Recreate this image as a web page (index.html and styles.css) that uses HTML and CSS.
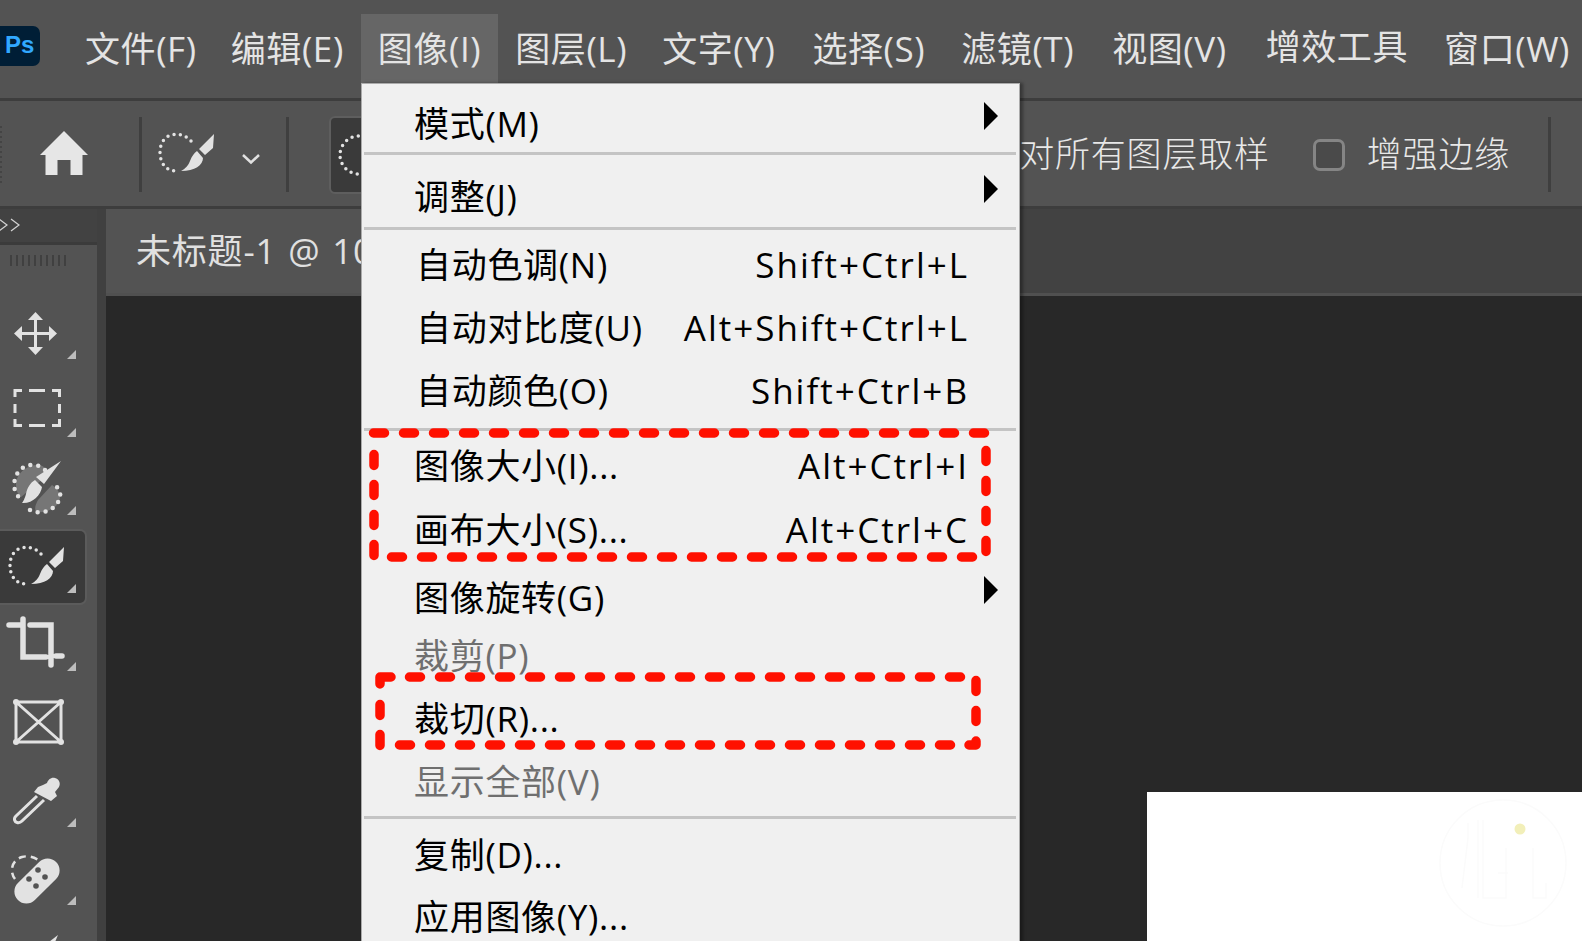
FILE: index.html
```html
<!DOCTYPE html>
<html lang="zh-CN">
<head>
<meta charset="utf-8">
<title>Photoshop 图像菜单</title>
<link rel="stylesheet" href="styles.css">
</head>
<body>
<div class="app">
  <header class="menubar">
    <div class="logo">Ps</div>
    <nav class="menus">
      <span class="mi">文件(F)</span>
      <span class="mi">编辑(E)</span>
      <span class="mi active">图像(I)</span>
      <span class="mi">图层(L)</span>
      <span class="mi">文字(Y)</span>
      <span class="mi">选择(S)</span>
      <span class="mi">滤镜(T)</span>
      <span class="mi">视图(V)</span>
      <span class="mi raised">增效工具</span>
      <span class="mi">窗口(W)</span>
    </nav>
  </header>

  <section class="options">
    <div class="grip-v"></div>
    <svg class="home" viewBox="0 0 50 46"><path d="M25 1 49 25 43.500 25V45H31.500V30H18.500V45H6.500V25H1Z"/></svg>
    <div class="divider first"></div>
    <svg class="preset" viewBox="0 0 60 44">
      <use href="#qs"/>
    </svg>
    <svg class="chev" viewBox="0 0 20 12"><path d="M2 2 10 9.500 18 2"/></svg>
    <div class="divider second"></div>
    <div class="opt-tool">
      <svg viewBox="0 0 30 44"><circle class="dots" cx="28" cy="22" r="19"/></svg>
    </div>
    <div class="opt-right">
      <span class="opt-text">对所有图层取样</span>
      <span class="check"></span>
      <span class="opt-text">增强边缘</span>
      <div class="divider last"></div>
    </div>
  </section>

  <section class="work">
    <aside class="tools">
      <div class="collapse"><svg viewBox="0 0 22 14"><path d="M-1 1 7 7-1 13M11 1 19 7 11 13"/></svg></div>
      <div class="panel">
        <div class="grip-h"></div>

        <div class="tool more">
          <svg viewBox="0 0 90 76"><path class="line" d="M35.500 20V58M16 38.500H55"/><path class="fill" d="M35.500 17 43 25H28ZM35.500 60 43 52H28ZM14 38.500 22 31V46ZM57 38.500 49 31V46Z"/></svg>
        </div>
        <div class="tool more">
          <svg viewBox="0 0 90 76"><path class="line" d="M15 24V17.500H22M29 17.500H45M52 17.500H59.500V24M59.500 31V40M59.500 46V52.500H52M45 52.500H29M22 52.500H15V46M15 40V31"/></svg>
        </div>
        <div class="tool more">
          <svg viewBox="0 0 90 76">
            <path class="shade" d="M38 14C27 14 16 22 16 34 16 39 18 44 21 46L43 28C45 24 46 21 45 17 43 15 41 14 38 14ZM36 61C46 62 58 58 60 47 60 41 56 36 52 34L38 49C36 53 34 57 36 61Z"/>
            <path class="dots fat" d="M45 19C36 10 19 13 15 28 13 36 15 43 20 47M30 59C41 65 56 59 60 47 61 42 59 38 56 35"/>
            <path class="fill" d="M61 10 44 33 36 26ZM35 29 42 36C41 44 32 53 22 52 23 51 25 47 26 43 27 37 30 32 35 29Z"/>
          </svg>
        </div>
        <div class="tool more selected">
          <svg viewBox="0 0 90 76"><use href="#qs" x="9" y="17"/></svg>
        </div>
        <div class="tool more">
          <svg viewBox="0 0 90 76"><path class="line thick" d="M9 18H22M23 12V50H46M30 18H51V58M56 49H62"/></svg>
        </div>
        <div class="tool">
          <svg viewBox="0 0 90 76"><path class="line" d="M16 17H61V57H16ZM16 17 61 57M61 17 16 57"/><circle class="fill" cx="16" cy="17" r="3"/><circle class="fill" cx="61" cy="17" r="3"/><circle class="fill" cx="16" cy="57" r="3"/><circle class="fill" cx="61" cy="57" r="3"/></svg>
        </div>
        <div class="tool more">
          <svg viewBox="0 0 90 76"><path class="line" d="M37 33 16 53C13 56 15 59 17 59.500 19 60 21 59 22 58L44 37"/><path class="fill" d="M38 24 43 22 47 20C48 17 51 14 55 15 59 16 61 20 59 24L55 29 57 33 51 38 34 29Z"/></svg>
        </div>
        <div class="tool more">
          <svg viewBox="0 0 90 76">
            <path class="dash-arc" d="M15 38C9 30 12 19 22 16 29 14 36 17 40 20"/>
            <rect class="fill" x="10" y="28" width="54" height="24" rx="12" transform="rotate(-45 37 40)"/>
            <circle class="hole" cx="38" cy="29" r="2.800"/><circle class="hole" cx="45" cy="36" r="2.800"/><circle class="hole" cx="29" cy="38" r="2.800"/><circle class="hole" cx="36" cy="45" r="2.800"/>
          </svg>
        </div>
        <div class="tool">
          <svg viewBox="0 0 90 76"><path class="fill" d="M58 16 45 26 52 30Z"/></svg>
        </div>
      </div>
    </aside>
    <div class="gutter"></div>
    <main class="doc">
      <div class="tabs">
        <div class="tab">未标题-1 @ 100%</div>
      </div>
      <div class="canvas-area">
        <div class="page">
          <svg class="mark" viewBox="0 0 130 130">
            <circle class="mark-ring" cx="65" cy="65" r="63"/>
            <path class="mark-line" d="M30 25V40L24 90M40 22V100M45 22V100H68V50M70 75H60M95 50V100H108V85"/>
            <circle class="mark-dot" cx="82" cy="31" r="5.500"/>
          </svg>
        </div>
      </div>
    </main>
  </section>

  <div class="dropdown">
    <div class="row r-first"><span>模式(M)</span><i class="arrow"></i></div>
    <div class="sep"></div>
    <div class="row r-14"><span>调整(J)</span><i class="arrow"></i></div>
    <div class="sep s-2"></div>
    <div class="row shift"><span>自动色调(N)</span><kbd>Shift+Ctrl+L</kbd></div>
    <div class="row shift"><span>自动对比度(U)</span><kbd>Alt+Shift+Ctrl+L</kbd></div>
    <div class="row shift"><span>自动颜色(O)</span><kbd>Shift+Ctrl+B</kbd></div>
    <div class="sep s-9"></div>
    <div class="row"><span>图像大小(I)...</span><kbd>Alt+Ctrl+I</kbd></div>
    <div class="row r-8"><span>画布大小(S)...</span><kbd>Alt+Ctrl+C</kbd></div>
    <div class="row r-12"><span>图像旋转(G)</span><i class="arrow"></i></div>
    <div class="row r-2 off"><span>裁剪(P)</span></div>
    <div class="row"><span>裁切(R)...</span></div>
    <div class="row off"><span>显示全部(V)</span></div>
    <div class="sep s-6"></div>
    <div class="row r-8"><span>复制(D)...</span></div>
    <div class="row r-6"><span>应用图像(Y)...</span></div>
  </div>

  <svg class="notes" viewBox="0 0 1582 941">
    <path class="dash" d="M373.500 433H985M986 450.500V552M391.500 557H973M374 454.500V556"/>
    <path class="solid" d="M380 684V677H391M976 741V745H969M380 704.500V715.500M380 734.500V745.500M976 680.500V691.500M976 710.500V721.500"/>
    <path class="dash" d="M409.500 677H961M399.500 745H951"/>
  </svg>

  <svg class="defs" width="0" height="0">
    <defs>
      <g id="qs">
        <path class="dots" d="M32 8C27 2 19 0 12 2 5 4 1 11 1 19 1 27 4 33 9 36 12 38 15 38 19 38"/>
        <path class="fill" d="M55 1 54 15 46 22 40 16ZM38 18 44 25C44 32 36 38 22 38 27 35 29 33 31 28 33 23 35 20 38 18Z"/>
      </g>
    </defs>
  </svg>
</div>
</body>
</html>
```
FILE: styles.css
```css
* { box-sizing: border-box; }
html, body { margin: 0; padding: 0; height: 100%; overflow: hidden; background: #535353; }
body { font-family: "Open Sans", "Noto Sans CJK SC", sans-serif; }

.app { position: relative; width: 1582px; height: 941px; overflow: hidden; display: flex; flex-direction: column; }

/* menu bar */
.menubar { height: 101px; flex: none; display: flex; align-items: flex-start; background: #535353; border-bottom: 3px solid #3d3d3d; }
.logo { width: 40px; height: 40px; margin-top: 26px; flex: none; border-radius: 0 7px 7px 0; background: #001e36; color: #31a8ff; font: 700 24px/38px "Liberation Sans", sans-serif; padding-left: 5px; }
.menus { display: flex; margin-left: 28px; margin-top: 14px; }
.mi { height: 69px; padding: 0 17px; font-size: 35px; line-height: 69px; color: #e4e4e4; white-space: nowrap; letter-spacing: .6px; }
.mi:nth-child(5) { margin-left: 1px; }
.mi:nth-child(6) { margin-left: 3px; }
.mi:nth-child(7) { margin-left: 2px; }
.mi:nth-child(8) { margin-left: 4px; }
.mi:nth-child(9) { margin-left: 5px; }
.mi:nth-child(10) { margin-left: 2px; }
.mi.active { background: #666; }
.mi.raised { line-height: 65px; }

/* options bar */
.options { height: 108px; flex: none; display: flex; align-items: center; background: #535353; border-bottom: 3px solid #3d3d3d; position: relative; padding-top: 2px; }
.grip-v { width: 2px; height: 58px; margin-right: 38px; background: repeating-linear-gradient(#444 0 2px, transparent 2px 5px); }
.home { width: 50px; height: 46px; margin-top: -4px; margin-left: -1px; fill: #e6e6e6; flex: none; }
.divider { width: 3px; height: 75px; background: #3f3f3f; flex: none; }
.divider.first { margin-left: 50px; }
.preset { width: 60px; height: 44px; margin-left: 17px; flex: none; overflow: visible; }
.chev { width: 20px; height: 12px; margin-left: 22px; margin-top: 8px; fill: none; stroke: #e0e0e0; stroke-width: 2.500; flex: none; }
.divider.second { margin-left: 25px; }
.opt-tool { width: 60px; height: 78px; margin-left: 40px; background: #3a3a3a; border: 2px solid #5e5e5e; border-radius: 6px; display: flex; align-items: center; flex: none; }
.opt-tool svg { width: 30px; height: 44px; }
.opt-right { margin-left: auto; display: flex; align-items: center; padding-right: 31px; }
.opt-text { font-size: 35px; color: #e8e8e8; white-space: nowrap; line-height: 50px; font-weight: 300; letter-spacing: .8px; margin-top: -2px; }
.check { width: 32px; height: 32px; margin: 0 22px 0 43px; border: 3px solid #858585; border-radius: 7px; background: #4a4a4a; }
.divider.last { margin-left: 38px; }

/* work area */
.work { flex: 1; display: flex; min-height: 0; }
.tools { width: 97px; flex: none; display: flex; flex-direction: column; background: #535353; }
.collapse { height: 33px; background: #424242; flex: none; }
.collapse svg { width: 22px; height: 14px; margin-top: 9px; display: block; fill: none; stroke: #d4d4d4; stroke-width: 1.200; }
.panel { flex: 1; border-top: 3px solid #3b3b3b; }
.grip-h { width: 57px; height: 11px; margin: 10px 0 29px 10px; background: repeating-linear-gradient(90deg, #404040 0 2px, transparent 2px 6px); }
.tool { position: relative; height: 76px; width: 87px; margin-bottom: 2px; }
.tool svg { width: 90px; height: 76px; display: block; overflow: visible; }
.tool.more::after { content: ""; position: absolute; left: 67px; top: 55px; border-left: 9px solid transparent; border-bottom: 9px solid #bdbdbd; }
.tool.selected { background: #3a3a3a; border: 2px solid #5b5b5b; border-left: 0; border-radius: 0 7px 7px 0; }
.tool.selected svg { margin-top: -2px; }
.tool.selected::after { top: 53px; }
.gutter { width: 9px; flex: none; background: #404040; }

.line { fill: none; stroke: #e2e2e2; stroke-width: 3; }
.line.thick { stroke-width: 5.500; stroke-linecap: round; }
.fill { fill: #e2e2e2; }
.shade { fill: #767676; }
.dots { fill: none; stroke: #e2e2e2; stroke-width: 3.500; stroke-linecap: round; stroke-dasharray: 0 6.300; }
.dots.fat { stroke-width: 4.500; stroke-dasharray: 0 8; }
.dash-arc { fill: none; stroke: #e2e2e2; stroke-width: 2.500; stroke-dasharray: 7 5; }
.hole { fill: #535353; }

/* document */
.doc { flex: 1; display: flex; flex-direction: column; min-width: 0; }
.tabs { height: 87px; flex: none; background: #424242; border-bottom: 3px solid #505050; }
.tab { width: 500px; height: 84px; padding-left: 30px; background: #535353; font-size: 35px; line-height: 84px; color: #e0e0e0; white-space: nowrap; letter-spacing: .8px; word-spacing: 2px; }
.canvas-area { flex: 1; background: #282828; display: flex; justify-content: flex-end; align-items: flex-start; padding-top: 496px; }
.page { width: 435px; height: 160px; background: #fff; display: flex; justify-content: flex-end; padding: 6px 14px 0 0; }
.mark { width: 130px; height: 130px; flex: none; fill: none; }
.mark-ring, .mark-line { stroke: #fbfbfb; stroke-width: 1.500; }
.mark-dot { fill: #f2efb9; }

/* dropdown */
.dropdown { position: absolute; left: 361px; top: 83px; width: 659px; height: 870px; background: #f0f0f0; border: 1px solid #ababab; padding: 12px 3px 0 2px; box-shadow: 3px 0 3px rgba(0,0,0,.35); display: flex; flex-direction: column; }
.row { height: 56px; flex: none; margin-top: 7px; padding: 0 47px 6px 50px; display: flex; align-items: center; justify-content: space-between; font-size: 35px; color: #000; white-space: nowrap; position: relative; letter-spacing: .7px; }
.row.r-first { margin-top: 0; }
.row.r-14 { margin-top: 14px; }
.row.r-12 { margin-top: 12px; }
.row.r-8 { margin-top: 8px; }
.row.r-6 { margin-top: 6px; }
.row.r-2 { margin-top: 2px; }
.row.shift { padding-left: 52px; }
.row.off { color: #6f6f6f; }
kbd { font: inherit; letter-spacing: 2px; margin-top: 4px; }
.sep { height: 3px; flex: none; background: #c4c4c4; }
.sep.s-2 { margin-top: 2px; }
.sep.s-9 { margin-top: 9px; }
.sep.s-6 { margin-top: 6px; }
.arrow { position: absolute; left: 620px; top: 6px; border-left: 14px solid #000; border-top: 14px solid transparent; border-bottom: 14px solid transparent; }

/* red annotations */
.notes { position: absolute; left: 0; top: 0; width: 1582px; height: 941px; pointer-events: none; }
.dash, .solid { fill: none; stroke: #ff1000; stroke-width: 9.500; stroke-linecap: round; stroke-linejoin: round; }
.dash { stroke-dasharray: 11 19; }
.defs { position: absolute; }
```
